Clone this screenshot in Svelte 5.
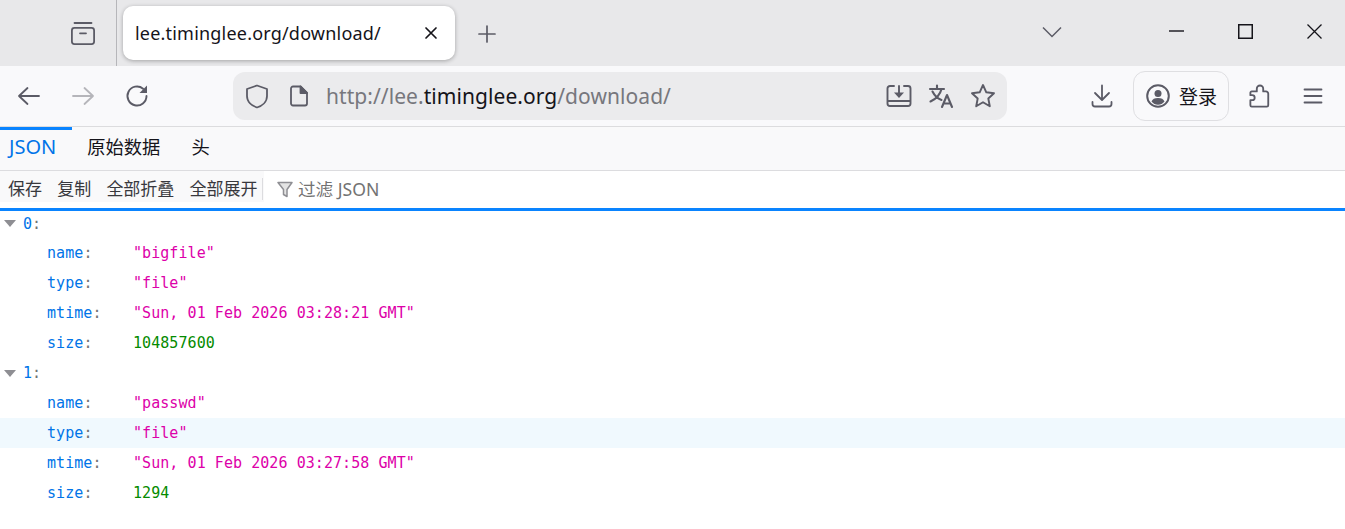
<script>
  const groups = [
    { index: 0, rows: [
      ['name', '"bigfile"', 's'], ['type', '"file"', 's'],
      ['mtime', '"Sun, 01 Feb 2026 03:28:21 GMT"', 's'], ['size', '104857600', 'n']
    ]},
    { index: 1, rows: [
      ['name', '"passwd"', 's'], ['type', '"file"', 's'],
      ['mtime', '"Sun, 01 Feb 2026 03:27:58 GMT"', 's'], ['size', '1294', 'n']
    ]}
  ];
</script>

<div class="window">
  <header class="titlebar">
    <div class="views">
      <svg width="28" height="28" viewBox="0 0 28 28" fill="none" stroke="#5b5b66" stroke-width="1.8" stroke-linecap="round">
        <path d="M5.500 4h17"/>
        <rect x="2.900" y="8.900" width="22.200" height="16.200" rx="2.500"/>
        <path d="M11 14.300h6"/>
      </svg>
    </div>
    <div class="tab">
      <span class="tab-title">lee.timinglee.org/download/</span>
      <svg width="14" height="14" viewBox="0 0 14 14" stroke="#15141a" stroke-width="1.7" stroke-linecap="round"><path d="M2 2l10 10M12 2L2 12"/></svg>
    </div>
    <div class="newtab">
      <svg width="20" height="20" viewBox="0 0 20 20" stroke="#5b5b66" stroke-width="1.7" stroke-linecap="round"><path d="M10 2v16M2 10h16"/></svg>
    </div>
    <div class="spacer"></div>
    <div class="tabs-menu">
      <svg width="20" height="12" viewBox="0 0 20 12" fill="none" stroke="#5b5b66" stroke-width="1.5"><path d="M1 1.500l9 9 9-9"/></svg>
    </div>
    <div class="winctl">
      <svg width="16" height="16" viewBox="0 0 16 16" stroke="#15141a" stroke-width="1.4"><path d="M0 7h15"/></svg>
      <svg width="16" height="16" viewBox="0 0 16 16" fill="none" stroke="#15141a" stroke-width="1.5"><rect x=".75" y=".75" width="13.500" height="13.500"/></svg>
      <svg width="16" height="16" viewBox="0 0 16 16" stroke="#15141a" stroke-width="1.3"><path d="M.5.500l14 14M14.500.500l-14 14"/></svg>
    </div>
  </header>

  <nav class="toolbar">
    <div class="navbtns">
      <svg width="24" height="24" viewBox="0 0 24 24" fill="none" stroke="#5b5b66" stroke-width="1.8" stroke-linecap="round" stroke-linejoin="round"><path d="M2 12h20M10.500 4L2 12l8.500 8"/></svg>
      <svg width="24" height="24" viewBox="0 0 24 24" fill="none" stroke="#b5b5ba" stroke-width="1.8" stroke-linecap="round" stroke-linejoin="round"><path d="M2 12h20M13.500 4L22 12l-8.500 8"/></svg>
      <svg width="24" height="24" viewBox="0 0 24 24" fill="none" stroke="#5b5b66" stroke-width="1.9" stroke-linecap="round" stroke-linejoin="round"><path d="M21.500 12a9.500 9.500 0 1 1-3.400-7.300"/><path d="M22 1.500v7.500h-7.500z" fill="#5b5b66" stroke="none"/></svg>
    </div>
    <div class="urlbar">
      <svg width="24" height="26" viewBox="0 0 24 26" fill="none" stroke="#5b5b66" stroke-width="1.8" stroke-linejoin="round"><path d="M12 2.500l10 3.500v7c0 6-5 10-10 11.500C7 23 2 19 2 13V6z"/></svg>
      <svg class="doc" width="20" height="22" viewBox="0 0 20 22" fill="none" stroke="#5b5b66" stroke-width="1.8" stroke-linejoin="round"><path d="M4 1.500h7.500L18 8v10.500a2 2 0 0 1-2 2H4a2 2 0 0 1-2-2v-15a2 2 0 0 1 2-2z"/><path d="M11.500 1.500V8H18z" fill="#5b5b66"/></svg>
      <span class="url">http://lee.<b>timinglee.org</b>/download/</span>
      <div class="spacer"></div>
      <div class="url-actions">
        <svg width="26" height="24" viewBox="0 0 26 24" fill="none" stroke="#5b5b66" stroke-width="1.9" stroke-linecap="round" stroke-linejoin="round"><path d="M8 2H4a2.500 2.500 0 0 0-2.500 2.500v15A2.500 2.500 0 0 0 4 22h18a2.500 2.500 0 0 0 2.500-2.500v-15A2.500 2.500 0 0 0 22 2h-4"/><path d="M2 17h22"/><path d="M13 2v9"/><path d="M8 8.500h10L13 14z" fill="#5b5b66" stroke="none"/></svg>
        <svg width="26" height="24" viewBox="0 0 26 24" fill="none" stroke="#5b5b66" stroke-width="2.100" stroke-linecap="round" stroke-linejoin="round"><path d="M2 5h14M9 1.500V5M13.500 5C12 11 8 15 2.500 17.500M4.500 7.500c2 4 5 7 9 8.500"/><path d="M14 23l5-12 5 12M15.800 19.500h6.500"/></svg>
        <svg width="26" height="26" viewBox="0 0 26 26" fill="none" stroke="#5b5b66" stroke-width="1.9" stroke-linejoin="round"><path d="M13 2l3.300 7.300 7.700.9-5.700 5.300 1.500 7.800L13 19.300 6.200 23.300l1.500-7.800L2 10.200l7.700-.9z"/></svg>
      </div>
    </div>
    <div class="spacer"></div>
    <div class="right-tools">
      <svg width="22" height="24" viewBox="0 0 22 24" fill="none" stroke="#5b5b66" stroke-width="1.8" stroke-linecap="round" stroke-linejoin="round"><path d="M11 1.500V15M4 9l7 7 7-7"/><path d="M1.500 18v2a2.500 2.500 0 0 0 2.500 2.500h14a2.500 2.500 0 0 0 2.500-2.500v-2"/></svg>
      <div class="signin">
        <svg width="24" height="24" viewBox="0 0 24 24" fill="none" stroke="#5b5b66" stroke-width="2"><circle cx="12" cy="12" r="10.800"/><circle cx="12" cy="9.500" r="3.500" fill="#5b5b66" stroke="none"/><path d="M5.500 17.500c1-2.500 3-3.500 6.500-3.500s5.500 1 6.500 3.500c-1.500 2-4 3.300-6.500 3.300s-5-1.300-6.500-3.300z" fill="#5b5b66" stroke="none"/></svg>
        <span>登录</span>
      </div>
      <svg width="22" height="24" viewBox="0 0 24 26" fill="none" stroke="#5b5b66" stroke-width="2" stroke-linejoin="round"><path d="M3 24.500a1.500 1.500 0 0 1-1.500-1.500v-5.500h2a2.700 2.700 0 0 0 0-5.400h-2V9.500A1.500 1.500 0 0 1 3 8h5.500V5a3.500 3.500 0 0 1 7 0v3h3A2.500 2.500 0 0 1 21 10.500V23a1.500 1.500 0 0 1-1.500 1.500z"/></svg>
      <svg class="menu" width="20" height="18" viewBox="0 0 20 18" stroke="#5b5b66" stroke-width="1.8" stroke-linecap="round"><path d="M1.500 2.500h17M1.500 9h17M1.500 15.500h17"/></svg>
    </div>
  </nav>

  <div class="tabs">
    <span class="jsontab selected">JSON</span>
    <span class="jsontab">原始数据</span>
    <span class="jsontab">头</span>
  </div>

  <div class="actions">
    <div class="buttons">
      <span>保存</span><span>复制</span><span>全部折叠</span><span>全部展开</span>
      <i class="sep"></i>
    </div>
    <div class="filter">
      <svg width="16" height="17" viewBox="0 0 16 17" fill="#e4e4e4" stroke="#8f8f94" stroke-width="1.500" stroke-linejoin="round"><path d="M1 1.500h14L10 8.500V15.500L6.500 13.500V8.500z"/></svg>
      <span>过滤 JSON</span>
    </div>
  </div>

  <main class="tree">
    {#each groups as g}
      <div class="row top">
        <span class="twisty"></span><span class="key">{g.index}</span><span class="colon">:</span>
      </div>
      {#each g.rows as r}
        <div class="row child" class:hover={g.index === 1 && r[0] === 'type'}>
          <span class="label"><span class="key">{r[0]}</span><span class="colon">:</span></span>
          <span class={r[2] === 's' ? 'str' : 'num'}>{r[1]}</span>
        </div>
      {/each}
    {/each}
  </main>
</div>

<style>
  :global(body) { margin: 0; background: #fff; }
  .window {
    width: 1345px; height: 529px; overflow: hidden;
    font-family: "Noto Sans", "Noto Sans CJK SC", sans-serif; color: #15141a;
  }
  .spacer { flex: 1; }
  svg { flex: none; display: block; }

  .titlebar { height: 66px; background: #e8e8ea; display: flex; align-items: flex-start; }
  .views {
    width: 116px; height: 66px; border-right: 1px solid #b6b6ba;
    display: flex; align-items: center; justify-content: flex-end;
  }
  .views svg { margin-right: 19px; }
  .tab {
    margin: 6px 0 0 6px; width: 332px; height: 54px; box-sizing: border-box;
    background: #fff; border-radius: 10px; box-shadow: 0 1px 4px rgba(0,0,0,.3);
    display: flex; align-items: center; padding: 0 17px 0 12px; justify-content: space-between;
  }
  .tab-title { font-size: 18px; letter-spacing: 0.2px; white-space: nowrap; }
  .newtab { margin: 24px 0 0 22px; }
  .tabs-menu { margin: 26px 0 0; }
  .winctl { display: flex; gap: 53px; margin: 24px 22px 0 107px; }

  .toolbar {
    height: 60px; background: #f9f9fb; border-bottom: 1px solid #dcdcde;
    display: flex; align-items: center;
  }
  .navbtns { display: flex; gap: 30px; padding-left: 17px; }
  .urlbar {
    margin-left: 84px; width: 774px; height: 48px; border-radius: 12px; background: #ebebed;
    display: flex; align-items: center; padding: 0 11px 0 12px; box-sizing: border-box;
  }
  .doc { margin-left: 20px; }
  .url { margin-left: 17px; font-size: 21px; letter-spacing: 0.06px; color: #77777d; white-space: nowrap; }
  .url b { font-weight: 400; color: #15141a; }
  .url-actions { display: flex; gap: 16px; align-items: center; }
  .right-tools { display: flex; align-items: center; padding-right: 22px; }
  .signin {
    margin: 0 20px; width: 96px; height: 50px; box-sizing: border-box;
    border: 1px solid #dfdfe2; border-radius: 12px;
    display: flex; align-items: center; gap: 9px; padding-left: 12px; font-size: 19px;
  }
  .menu { margin-left: 32px; }

  .tabs {
    height: 38px; padding-bottom: 5px; background: #f9f9fa; border-bottom: 1px solid #dcdcdf;
    display: flex; align-items: center; position: relative;
  }
  .tabs::before {
    content: ""; position: absolute; left: 0; top: 0; width: 72px; height: 3px; background: #0a84ff;
  }
  .jsontab { font-size: 18.300px; padding: 0 9px; margin-right: 13px; }
  .jsontab.selected { color: #0074e8; font-size: 20px; }

  .actions { height: 37px; display: flex; align-items: flex-start; background: #fff; }
  .buttons {
    height: 31px; background: #f9f9fa; display: flex; align-items: flex-start; gap: 15.200px;
    padding: 7px 0 0 8px; box-sizing: border-box; width: 264px;
    font-size: 17px; line-height: 22px; color: #38383d; white-space: nowrap;
  }
  .sep { width: 1px; height: 22px; background: #dcdcdf; margin-left: -11px; flex: none; }
  .filter {
    display: flex; align-items: center; gap: 5px; padding: 8px 0 0 13px;
    font-size: 17.600px; line-height: 20px; color: #737373; white-space: nowrap;
  }

  .tree {
    border-top: 3px solid #0a84ff;
    font-family: "DejaVu Sans Mono", monospace; font-size: 15px; letter-spacing: 0.06px;
  }
  .row { height: 30px; display: flex; align-items: center; white-space: pre; }
  .top:first-child { height: 25px; padding-bottom: 2px; }
  .top { padding-left: 4px; }
  .twisty {
    width: 0; height: 0; margin: 0 7px 0 0;
    border-left: 6px solid transparent; border-right: 6px solid transparent; border-top: 7px solid #8e8e93;
  }
  .child { padding-left: 47px; }
  .child.hover { background: #f0f9fe; }
  .label { width: 86px; flex: none; }
  .key { color: #0074e8; }
  .colon { color: #737373; }
  .str { color: #dd00a9; }
  .num { color: #058b00; }
</style>
